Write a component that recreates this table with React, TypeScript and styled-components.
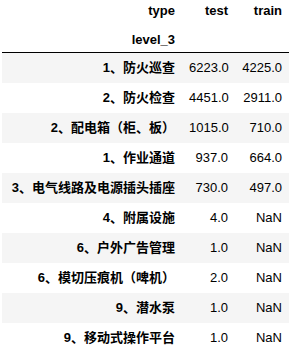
import styled, { createGlobalStyle } from 'styled-components'

const Global = createGlobalStyle`
body{
  margin:0;
  background:#fff;
  font-family:"Liberation Sans", Arial, "Noto Sans CJK SC", sans-serif;
  font-size:13px;
  color:#000;
}
`

const Frame = styled.div`
padding:0 2px;
`

const Table = styled.table`
border-collapse:collapse;
border-spacing:0;
table-layout:fixed;
width:287px;
`

const Head = styled.thead`
border-bottom:1px solid #000;
`

const HeadCell = styled.th<{ $top?: boolean }>`
text-align:right;
font-weight:bold;
line-height:17px;
padding:${p => (p.$top ? '2px 7px 6px' : '6px 7px 4px')};
`

const Row = styled.tr<{ $odd: boolean }>`
background:${p => (p.$odd ? '#f5f5f5' : '#fff')};
`

const IndexCell = styled.th`
text-align:right;
font-weight:bold;
line-height:17px;
padding:6px 7px 7px;
white-space:nowrap;
`

const Cell = styled.td`
text-align:right;
line-height:17px;
padding:6px 7px 7px;
white-space:nowrap;
`

const rows: [string, string, string][] = [
  ['1、防火巡查', '6223.0', '4225.0'],
  ['2、防火检查', '4451.0', '2911.0'],
  ['2、配电箱（柜、板）', '1015.0', '710.0'],
  ['1、作业通道', '937.0', '664.0'],
  ['3、电气线路及电源插头插座', '730.0', '497.0'],
  ['4、附属设施', '4.0', 'NaN'],
  ['6、户外广告管理', '1.0', 'NaN'],
  ['6、模切压痕机（啤机）', '2.0', 'NaN'],
  ['9、潜水泵', '1.0', 'NaN'],
  ['9、移动式操作平台', '1.0', 'NaN'],
]

export default function App() {
  return <>
    <Global />
    <Frame>
      <Table>
        <colgroup>
          <col style={{ width: 180 }} />
          <col style={{ width: 53 }} />
          <col style={{ width: 54 }} />
        </colgroup>
        <Head>
          <tr>
            <HeadCell $top>type</HeadCell>
            <HeadCell $top>test</HeadCell>
            <HeadCell $top>train</HeadCell>
          </tr>
          <tr>
            <HeadCell>level_3</HeadCell>
            <HeadCell />
            <HeadCell />
          </tr>
        </Head>
        <tbody>
          {rows.map((r, i) => (
            <Row key={i} $odd={i % 2 === 0}>
              <IndexCell>{r[0]}</IndexCell>
              <Cell>{r[1]}</Cell>
              <Cell>{r[2]}</Cell>
            </Row>
          ))}
        </tbody>
      </Table>
    </Frame>
  </>
}
